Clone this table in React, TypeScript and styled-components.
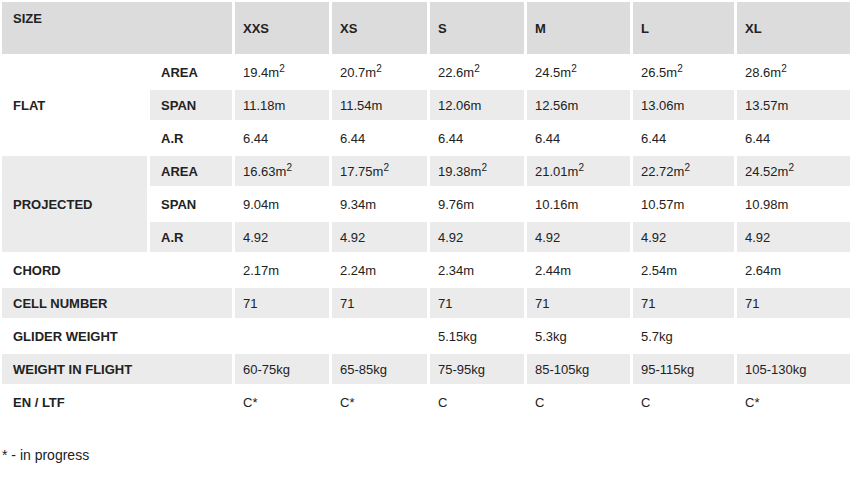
import React from "react";
import styled, { createGlobalStyle } from "styled-components";

const Global = createGlobalStyle`
  html, body { margin: 0; padding: 0; background: #fff; overflow: hidden; }
  body { font-family: "Liberation Sans", Arial, Helvetica, sans-serif; color: #222; }
`;

const Page = styled.div`
  width: 850px;
  height: 480px;
  overflow: hidden;
`;

const Table = styled.table`
  border-collapse: separate;
  border-spacing: 3px;
  table-layout: fixed;
  width: 871px;
  margin: -1px 0 0 -1px;
  font-size: 13px;
  line-height: 15px;
`;

const HeadCell = styled.th<{ $top?: boolean }>`
  background: #dcdcdc;
  height: 52px;
  box-sizing: border-box;
  padding: ${(p) => (p.$top ? "9px 11px 0" : "0 8px")};
  text-align: left;
  vertical-align: ${(p) => (p.$top ? "top" : "middle")};
  font-weight: bold;
  font-size: 13px;
`;

const Label = styled.td<{ $shade?: boolean }>`
  background: ${(p) => (p.$shade ? "#ebebeb" : "#fff")};
  font-weight: bold;
  padding: 0 11px;
  height: 30px;
  box-sizing: border-box;
  vertical-align: middle;
  white-space: nowrap;
`;

const Value = styled.td<{ $shade?: boolean }>`
  background: ${(p) => (p.$shade ? "#ebebeb" : "#fff")};
  padding: 0 8px;
  height: 30px;
  box-sizing: border-box;
  vertical-align: middle;
  white-space: nowrap;
`;

const Sup = styled.sup`
  font-size: 10px;
  line-height: 0;
  vertical-align: 5px;
`;

const Note = styled.p`
  margin: 27px 0 0 2px;
  font-size: 14px;
  line-height: 16px;
`;

const sizes = ["XXS", "XS", "S", "M", "L", "XL"];
const widths = [145, 82, 94, 95, 94, 103, 101, 130];

const area = (v: string) => (
  <>
    {v}m<Sup>2</Sup>
  </>
);

type Row = { group?: { label: string; span: number }; sub?: string; label?: string; values: React.ReactNode[] };

const rows: Row[] = [
  { group: { label: "FLAT", span: 3 }, sub: "AREA", values: ["19.4", "20.7", "22.6", "24.5", "26.5", "28.6"].map(area) },
  { sub: "SPAN", values: ["11.18m", "11.54m", "12.06m", "12.56m", "13.06m", "13.57m"] },
  { sub: "A.R", values: ["6.44", "6.44", "6.44", "6.44", "6.44", "6.44"] },
  { group: { label: "PROJECTED", span: 3 }, sub: "AREA", values: ["16.63", "17.75", "19.38", "21.01", "22.72", "24.52"].map(area) },
  { sub: "SPAN", values: ["9.04m", "9.34m", "9.76m", "10.16m", "10.57m", "10.98m"] },
  { sub: "A.R", values: ["4.92", "4.92", "4.92", "4.92", "4.92", "4.92"] },
  { label: "CHORD", values: ["2.17m", "2.24m", "2.34m", "2.44m", "2.54m", "2.64m"] },
  { label: "CELL NUMBER", values: ["71", "71", "71", "71", "71", "71"] },
  { label: "GLIDER WEIGHT", values: ["", "", "5.15kg", "5.3kg", "5.7kg", ""] },
  { label: "WEIGHT IN FLIGHT", values: ["60-75kg", "65-85kg", "75-95kg", "85-105kg", "95-115kg", "105-130kg"] },
  { label: "EN / LTF", values: ["C*", "C*", "C", "C", "C", "C*"] },
];

export default function App() {
  return (
    <Page>
      <Global />
      <Table>
        <colgroup>
          {widths.map((w, i) => (
            <col key={i} style={{ width: w }} />
          ))}
        </colgroup>
        <thead>
          <tr>
            <HeadCell $top colSpan={2}>SIZE</HeadCell>
            {sizes.map((s) => (
              <HeadCell key={s}>{s}</HeadCell>
            ))}
          </tr>
        </thead>
        <tbody>
          {rows.map((r, i) => {
            const shade = i % 2 === 1;
            return (
              <tr key={i}>
                {r.group && (
                  <Label $shade={shade} rowSpan={r.group.span}>
                    {r.group.label}
                  </Label>
                )}
                {r.sub && <Label $shade={shade}>{r.sub}</Label>}
                {r.label && (
                  <Label $shade={shade} colSpan={2}>
                    {r.label}
                  </Label>
                )}
                {r.values.map((v, j) => (
                  <Value key={j} $shade={shade}>
                    {v}
                  </Value>
                ))}
              </tr>
            );
          })}
        </tbody>
      </Table>
      <Note>* - in progress</Note>
    </Page>
  );
}
